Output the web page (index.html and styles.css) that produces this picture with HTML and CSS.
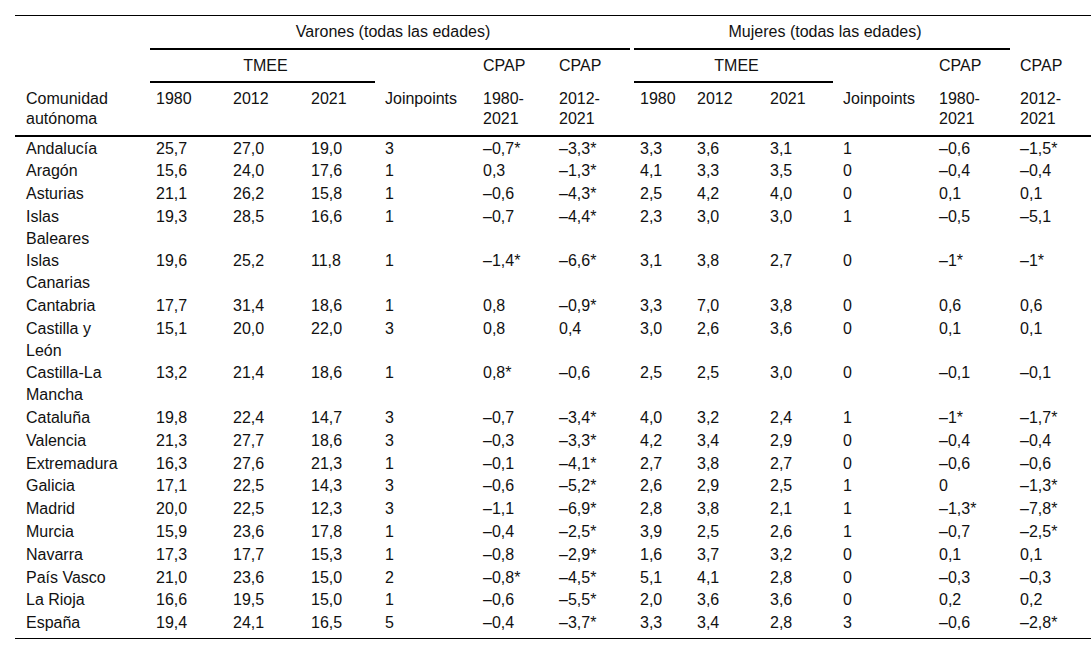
FILE: index.html
```html
<!DOCTYPE html>
<html lang="es">
<head>
<meta charset="utf-8">
<title>Tabla</title>
<link rel="stylesheet" href="styles.css">
</head>
<body>
<div class="wrap">
<table class="data">
<colgroup>
<col class="w131"><col class="w77"><col class="w78"><col class="w74"><col class="w98"><col class="w76"><col class="w81">
<col class="w57"><col class="w73"><col class="w73"><col class="w96"><col class="w81"><col class="w81">
</colgroup>
<thead>
<tr class="h1">
<th></th>
<th colspan="6" class="grp"><div class="ul">Varones (todas las edades)</div></th>
<th colspan="5" class="grp"><div class="ul">Mujeres (todas las edades)</div></th>
<th></th>
</tr>
<tr class="h2">
<th></th>
<th colspan="3" class="grp"><div class="ul">TMEE</div></th>
<th></th>
<th>CPAP</th>
<th>CPAP</th>
<th colspan="3" class="grp"><div class="ul">TMEE</div></th>
<th></th>
<th>CPAP</th>
<th>CPAP</th>
</tr>
<tr class="h3">
<th class="first">Comunidad autónoma</th>
<th>1980</th><th>2012</th><th>2021</th><th>Joinpoints</th><th>1980-2021</th><th>2012-2021</th>
<th>1980</th><th>2012</th><th>2021</th><th>Joinpoints</th><th>1980-2021</th><th>2012-2021</th>
</tr>
</thead>
<tbody>
<tr><td class="first">Andalucía</td><td>25,7</td><td>27,0</td><td>19,0</td><td>3</td><td>–0,7*</td><td>–3,3*</td><td>3,3</td><td>3,6</td><td>3,1</td><td>1</td><td>–0,6</td><td>–1,5*</td></tr>
<tr><td class="first">Aragón</td><td>15,6</td><td>24,0</td><td>17,6</td><td>1</td><td>0,3</td><td>–1,3*</td><td>4,1</td><td>3,3</td><td>3,5</td><td>0</td><td>–0,4</td><td>–0,4</td></tr>
<tr><td class="first">Asturias</td><td>21,1</td><td>26,2</td><td>15,8</td><td>1</td><td>–0,6</td><td>–4,3*</td><td>2,5</td><td>4,2</td><td>4,0</td><td>0</td><td>0,1</td><td>0,1</td></tr>
<tr><td class="first">Islas Baleares</td><td>19,3</td><td>28,5</td><td>16,6</td><td>1</td><td>–0,7</td><td>–4,4*</td><td>2,3</td><td>3,0</td><td>3,0</td><td>1</td><td>–0,5</td><td>–5,1</td></tr>
<tr><td class="first">Islas Canarias</td><td>19,6</td><td>25,2</td><td>11,8</td><td>1</td><td>–1,4*</td><td>–6,6*</td><td>3,1</td><td>3,8</td><td>2,7</td><td>0</td><td>–1*</td><td>–1*</td></tr>
<tr><td class="first">Cantabria</td><td>17,7</td><td>31,4</td><td>18,6</td><td>1</td><td>0,8</td><td>–0,9*</td><td>3,3</td><td>7,0</td><td>3,8</td><td>0</td><td>0,6</td><td>0,6</td></tr>
<tr><td class="first">Castilla y León</td><td>15,1</td><td>20,0</td><td>22,0</td><td>3</td><td>0,8</td><td>0,4</td><td>3,0</td><td>2,6</td><td>3,6</td><td>0</td><td>0,1</td><td>0,1</td></tr>
<tr><td class="first">Castilla-La Mancha</td><td>13,2</td><td>21,4</td><td>18,6</td><td>1</td><td>0,8*</td><td>–0,6</td><td>2,5</td><td>2,5</td><td>3,0</td><td>0</td><td>–0,1</td><td>–0,1</td></tr>
<tr><td class="first">Cataluña</td><td>19,8</td><td>22,4</td><td>14,7</td><td>3</td><td>–0,7</td><td>–3,4*</td><td>4,0</td><td>3,2</td><td>2,4</td><td>1</td><td>–1*</td><td>–1,7*</td></tr>
<tr><td class="first">Valencia</td><td>21,3</td><td>27,7</td><td>18,6</td><td>3</td><td>–0,3</td><td>–3,3*</td><td>4,2</td><td>3,4</td><td>2,9</td><td>0</td><td>–0,4</td><td>–0,4</td></tr>
<tr><td class="first">Extremadura</td><td>16,3</td><td>27,6</td><td>21,3</td><td>1</td><td>–0,1</td><td>–4,1*</td><td>2,7</td><td>3,8</td><td>2,7</td><td>0</td><td>–0,6</td><td>–0,6</td></tr>
<tr><td class="first">Galicia</td><td>17,1</td><td>22,5</td><td>14,3</td><td>3</td><td>–0,6</td><td>–5,2*</td><td>2,6</td><td>2,9</td><td>2,5</td><td>1</td><td>0</td><td>–1,3*</td></tr>
<tr><td class="first">Madrid</td><td>20,0</td><td>22,5</td><td>12,3</td><td>3</td><td>–1,1</td><td>–6,9*</td><td>2,8</td><td>3,8</td><td>2,1</td><td>1</td><td>–1,3*</td><td>–7,8*</td></tr>
<tr><td class="first">Murcia</td><td>15,9</td><td>23,6</td><td>17,8</td><td>1</td><td>–0,4</td><td>–2,5*</td><td>3,9</td><td>2,5</td><td>2,6</td><td>1</td><td>–0,7</td><td>–2,5*</td></tr>
<tr><td class="first">Navarra</td><td>17,3</td><td>17,7</td><td>15,3</td><td>1</td><td>–0,8</td><td>–2,9*</td><td>1,6</td><td>3,7</td><td>3,2</td><td>0</td><td>0,1</td><td>0,1</td></tr>
<tr><td class="first">País Vasco</td><td>21,0</td><td>23,6</td><td>15,0</td><td>2</td><td>–0,8*</td><td>–4,5*</td><td>5,1</td><td>4,1</td><td>2,8</td><td>0</td><td>–0,3</td><td>–0,3</td></tr>
<tr><td class="first">La Rioja</td><td>16,6</td><td>19,5</td><td>15,0</td><td>1</td><td>–0,6</td><td>–5,5*</td><td>2,0</td><td>3,6</td><td>3,6</td><td>0</td><td>0,2</td><td>0,2</td></tr>
<tr class="last"><td class="first">España</td><td>19,4</td><td>24,1</td><td>16,5</td><td>5</td><td>–0,4</td><td>–3,7*</td><td>3,3</td><td>3,4</td><td>2,8</td><td>3</td><td>–0,6</td><td>–2,8*</td></tr>
</tbody>
</table>
</div>
</body>
</html>
```

FILE: styles.css
```css
html, body {
  margin: 0;
  padding: 0;
  background: #fff;
}
body {
  font-family: "Liberation Sans", Arial, sans-serif;
  font-size: 16px;
  color: #111;
  overflow: hidden;
}
.wrap {
  padding: 15px 0 0 15px;
}
.data {
  width: 1076px;
  table-layout: fixed;
  border-collapse: collapse;
  border-top: 1px solid #000;
  border-bottom: 1px solid #000;
}
.w131 { width: 131px; }
.w77 { width: 77px; }
.w78 { width: 78px; }
.w74 { width: 74px; }
.w98 { width: 98px; }
.w76 { width: 76px; }
.w81 { width: 81px; }
.w57 { width: 57px; }
.w73 { width: 73px; }
.w96 { width: 96px; }

.data th {
  font-weight: normal;
  text-align: left;
  vertical-align: top;
  line-height: 20px;
  padding: 6px 0 5.5px 10px;
}
.data th.grp {
  padding-bottom: 0;
  text-align: center;
}
.data th.grp .ul {
  margin-left: -6px;
  padding: 0 0 5.5px 6px;
  border-bottom: 2px solid #000;
}
.data thead tr.h3 th {
  border-bottom: 2px solid #000;
}
.data td {
  vertical-align: top;
  line-height: 21.8px;
  padding: 1px 0 0 10px;
  white-space: normal;
}
.data tr.last td {
  padding-bottom: 4px;
}
.data .first {
  padding-left: 11px;
  padding-right: 28px;
}
```
